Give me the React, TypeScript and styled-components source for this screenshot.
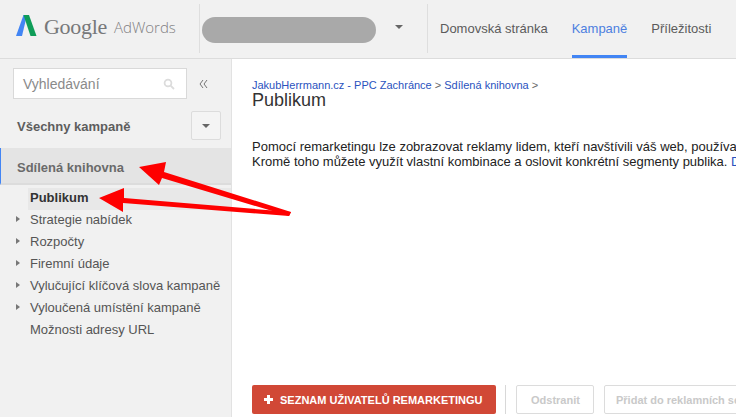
import React from "react";
import styled, { createGlobalStyle } from "styled-components";

const Global = createGlobalStyle`
  html, body { margin: 0; padding: 0; background: #fff; overflow: hidden; }
  body { font-family: "Liberation Sans", Arial, sans-serif; }
  * { box-sizing: border-box; }
`;
const Page = styled.div`
  position: relative;
  width: 736px;
  height: 417px;
  overflow: hidden;
  display: flex;
  flex-direction: column;
`;
const Header = styled.header`
  height: 59px;
  flex: none;
  display: flex;
  background: #f1f1f1;
  border-bottom: 1px solid #dcdcdc;
`;
const Logo = styled.div`
  width: 199px;
  flex: none;
  display: flex;
  align-items: flex-start;
  padding: 15px 0 0 16px;
`;
const LogoGoogle = styled.span`
  font-family: "Liberation Serif", serif;
  font-size: 22px;
  line-height: 24px;
  letter-spacing: -0.3px;
  color: #77787a;
  margin-left: 7px;
`;
const LogoAdWords = styled.span`
  font-family: "Open Sans", sans-serif;
  font-weight: 300;
  font-size: 15px;
  line-height: 24px;
  color: #7f8082;
  margin-left: 7px;
`;
const Divider = styled.div`
  width: 1px;
  height: 49px;
  margin-top: 4px;
  flex: none;
  background: #dedede;
`;
const Account = styled.div`
  width: 227px;
  flex: none;
  display: flex;
  align-items: center;
  padding: 0 0 0 2px;
  height: 58px;
`;
const AccountPill = styled.div`
  width: 174px;
  height: 26px;
  margin-top: 2px;
  border-radius: 13px;
  background: #a9a9a9;
`;
const Caret = styled.div`
  width: 0;
  height: 0;
  border-left: 4px solid transparent;
  border-right: 4px solid transparent;
  border-top: 4px solid #666;
`;
const AccountCaret = styled(Caret)`
  margin: 0 0 4px 19px;
`;
const Nav = styled.nav`
  display: flex;
  gap: 24px;
  padding-left: 12px;
`;
const NavItem = styled.a<{ $active?: boolean }>`
  height: 58px;
  display: block;
  padding-top: 21px;
  font-size: 13px;
  line-height: 16px;
  white-space: nowrap;
  color: ${(p) => (p.$active ? "#4d7fe0" : "#5b5b5b")};
  border-bottom: 3px solid ${(p) => (p.$active ? "#4285f4" : "transparent")};
`;
const Body = styled.div`
  flex: 1;
  display: flex;
  min-height: 0;
`;
const Sidebar = styled.aside`
  width: 232px;
  flex: none;
  background: #f1f1f1;
  border-right: 1px solid #e2e2e2;
`;
const SearchRow = styled.div`
  display: flex;
  align-items: center;
  padding: 9px 0 0 13px;
`;
const SearchBox = styled.div`
  width: 174px;
  height: 31px;
  background: #fff;
  border: 1px solid #d9d9d9;
  display: flex;
  align-items: center;
  justify-content: space-between;
  padding: 0 11px 0 9px;
  font-size: 14px;
  color: #8a8a8a;
`;
const Collapse = styled.span`
  margin-left: 12px;
  width: 12px;
  display: flex;
`;
const AllRow = styled.div`
  display: flex;
  align-items: center;
  justify-content: space-between;
  height: 29px;
  margin-top: 12px;
  padding: 0 10px 0 17px;
  font-size: 13px;
  font-weight: 700;
  color: #5d5d5d;
`;
const AllLabel = styled.span`
  padding-top: 2px;
`;
const DropButton = styled.div`
  width: 30px;
  height: 29px;
  border: 1px solid #dcdcdc;
  background: #f4f4f4;
  border-radius: 2px;
  display: flex;
  align-items: center;
  justify-content: center;
`;
const SharedRow = styled.div`
  height: 37px;
  margin-top: 8px;
  display: flex;
  align-items: center;
  padding: 3px 0 0 16px;
  background: #e4e4e4;
  border-left: 1px solid #4285f4;
  border-bottom: 2px solid #dcdcdc;
  font-size: 13px;
  font-weight: 700;
  color: #6a6a6a;
`;
const Tree = styled.ul`
  list-style: none;
  margin: 3px 0 0;
  padding: 0;
`;
const TreeItem = styled.li<{ $selected?: boolean }>`
  position: relative;
  height: 22px;
  line-height: 20px;
  margin-left: 28px;
  padding-left: 2px;
  font-size: 13px;
  white-space: nowrap;
  color: ${(p) => (p.$selected ? "#333" : "#555")};
  font-weight: ${(p) => (p.$selected ? 700 : 400)};
  background: ${(p) => (p.$selected ? "#e8e8e8" : "transparent")};
`;
const Tri = styled.span`
  position: absolute;
  left: -12px;
  top: 6px;
  width: 0;
  height: 0;
  border-top: 3.5px solid transparent;
  border-bottom: 3.5px solid transparent;
  border-left: 4px solid #777;
`;
const Main = styled.main`
  flex: 1;
  min-width: 0;
  display: flex;
  flex-direction: column;
  padding: 20px 0 0 20px;
  overflow: hidden;
`;
const Crumbs = styled.div`
  font-size: 11px;
  line-height: 13px;
  color: #666;
  white-space: nowrap;
`;
const CrumbLink = styled.a`
  color: #2a52be;
`;
const Title = styled.h1`
  margin: 0;
  font-size: 18px;
  line-height: 17px;
  font-weight: 400;
  color: #333;
`;
const Intro = styled.p`
  margin: 30px 0 0;
  font-size: 13px;
  line-height: 15px;
  color: #222;
  white-space: nowrap;
`;
const IntroLink = styled.span`
  color: #2a52be;
`;
const Toolbar = styled.div`
  margin-top: auto;
  margin-bottom: 3px;
  display: flex;
  align-items: center;
  white-space: nowrap;
`;
const PrimaryButton = styled.div`
  width: 244px;
  height: 29px;
  flex: none;
  background: #d14836;
  border-radius: 2px;
  display: flex;
  align-items: center;
  padding-left: 12px;
  gap: 7px;
  font-size: 11px;
  font-weight: 700;
  color: #fff;
`;
const Sep = styled.div`
  width: 1px;
  height: 29px;
  flex: none;
  background: #d8d8d8;
  margin: 0 10px 0 9px;
`;
const GhostButton = styled.div<{ $w: number }>`
  width: ${(p) => p.$w}px;
  height: 29px;
  flex: none;
  margin-right: 10px;
  border: 1px solid #dcdcdc;
  border-radius: 2px;
  display: flex;
  align-items: center;
  padding-left: ${(p) => (p.$w < 100 ? 14 : 11)}px;
  font-size: 11px;
  font-weight: 700;
  color: #c9c9c9;
`;
const Arrows = styled.svg`
  position: absolute;
  left: 0;
  top: 0;
  pointer-events: none;
`;

const items = [
  { t: "Strategie nabídek", a: true },
  { t: "Rozpočty", a: true },
  { t: "Firemní údaje", a: true },
  { t: "Vylučující klíčová slova kampaně", a: true },
  { t: "Vyloučená umístění kampaně", a: true },
  { t: "Možnosti adresy URL", a: false },
];

export default function App() {
  return (
    <Page>
      <Global />
      <Header>
        <Logo>
          <svg width="21" height="21" viewBox="0 0 21 21" style={{ flex: "none" }}>
            <path d="M0 21 L7.5 0 L11 0 L6 21 Z" fill="#4285f4" />
            <path d="M7.5 0 H13 L20.5 21 L14.5 21 Z" fill="#0f9d58" />
          </svg>
          <LogoGoogle>Google</LogoGoogle>
          <LogoAdWords>AdWords</LogoAdWords>
        </Logo>
        <Divider />
        <Account>
          <AccountPill />
          <AccountCaret />
        </Account>
        <Divider />
        <Nav>
          <NavItem>Domovská stránka</NavItem>
          <NavItem $active>Kampaně</NavItem>
          <NavItem>Příležitosti</NavItem>
        </Nav>
      </Header>
      <Body>
        <Sidebar>
          <SearchRow>
            <SearchBox>
              Vyhledávání
              <svg width="12" height="12" viewBox="0 0 12 12" fill="none" stroke="#dcdcdc" strokeWidth="1.8">
                <circle cx="5" cy="5" r="3.4" />
                <path d="M7.6 7.6 L11 11" />
              </svg>
            </SearchBox>
            <Collapse>
              <svg width="9" height="10" viewBox="0 0 9 10" fill="none" stroke="#666" strokeWidth="0.9">
                <path d="M4 1 L1 5 L4 9 M8 1 L5 5 L8 9" />
              </svg>
            </Collapse>
          </SearchRow>
          <AllRow>
            <AllLabel>Všechny kampaně</AllLabel>
            <DropButton>
              <Caret />
            </DropButton>
          </AllRow>
          <SharedRow>Sdílená knihovna</SharedRow>
          <Tree>
            <TreeItem $selected>Publikum</TreeItem>
            {items.map((i) => (
              <TreeItem key={i.t}>
                {i.a && <Tri />}
                {i.t}
              </TreeItem>
            ))}
          </Tree>
        </Sidebar>
        <Main>
          <Crumbs>
            <CrumbLink>JakubHerrmann.cz - PPC Zachránce</CrumbLink> &gt; <CrumbLink>Sdílená knihovna</CrumbLink> &gt;
          </Crumbs>
          <Title>Publikum</Title>
          <Intro>
            Pomocí remarketingu lze zobrazovat reklamy lidem, kteří navštívili váš web, používali vaši aplikaci
            <br />
            Kromě toho můžete využít vlastní kombinace a oslovit konkrétní segmenty publika. <IntroLink>Další informace</IntroLink>
          </Intro>
          <Toolbar>
            <PrimaryButton>
              <svg width="9" height="9" viewBox="0 0 9 9" fill="#fff">
                <path d="M3 0 H6 V3 H9 V6 H6 V9 H3 V6 H0 V3 H3 Z" />
              </svg>
              SEZNAM UŽIVATELŮ REMARKETINGU
            </PrimaryButton>
            <Sep />
            <GhostButton $w={78}>Odstranit</GhostButton>
            <GhostButton $w={200}>Přidat do reklamních sestav</GhostButton>
          </Toolbar>
        </Main>
      </Body>
      <Arrows width="736" height="417" viewBox="0 0 736 417">
        <path d="M291 212 L164 172 L166 162 L139 167 L159 185 L162 178 L289 216 Z" fill="#fe0000" />
        <path d="M291 212 L124 198 L124 188 L99 198 L123 212 L123 203 L289 216 Z" fill="#fe0000" />
      </Arrows>
    </Page>
  );
}
